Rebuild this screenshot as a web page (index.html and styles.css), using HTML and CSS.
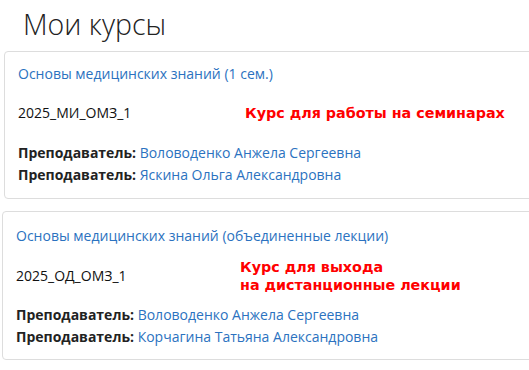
FILE: index.html
```html
<!DOCTYPE html>
<html lang="ru">
<head>
<meta charset="UTF-8">
<meta name="viewport" content="width=device-width, initial-scale=1.0">
<title>Мои курсы</title>
<link rel="stylesheet" href="styles.css">
</head>
<body>

<h1 class="page-title">Мои курсы</h1>

<div class="course-card course-card-first">
<a class="course-link" href="#">Основы медицинских знаний (1 сем.)</a>
<div class="course-row">
<span class="course-code">2025_МИ_ОМЗ_1</span>
<span class="course-note">Курс для работы на семинарах</span>
</div>
<div class="teachers">
<div class="teacher"><strong>Преподаватель:</strong> <a href="#">Воловоденко Анжела Сергеевна</a></div>
<div class="teacher"><strong>Преподаватель:</strong> <a href="#">Яскина Ольга Александровна</a></div>
</div>
</div>

<div class="course-card course-card-second">
<a class="course-link" href="#">Основы медицинских знаний (объединенные лекции)</a>
<div class="course-row">
<span class="course-code">2025_ОД_ОМЗ_1</span>
<span class="course-note">Курс для выхода<br>на дистанционные лекции</span>
</div>
<div class="teachers">
<div class="teacher"><strong>Преподаватель:</strong> <a href="#">Воловоденко Анжела Сергеевна</a></div>
<div class="teacher"><strong>Преподаватель:</strong> <a href="#">Корчагина Татьяна Александровна</a></div>
</div>
</div>

</body>
</html>
```

FILE: styles.css
```css
html {
overflow: hidden;
}
body {
margin: 0;
font-family: "Open Sans", "Noto Sans", sans-serif;
font-size: 14px;
color: #222;
background: #fff;
}
a {
color: #2b72c0;
text-decoration: none;
}
.page-title {
margin: 6px 0 9px 23px;
font-size: 28.5px;
line-height: 36px;
font-weight: 300;
color: #222;
}
.course-card {
width: 600px;
border: 1px solid #ddd;
border-radius: 4px;
line-height: 22px;
}
.course-card-first {
margin-left: 4px;
padding: 11px 13px 12px;
}
.course-card-second {
margin: 12px 0 0 2px;
padding: 13px 13px 11px;
}
.course-link {
display: block;
}
.course-row {
display: flex;
align-items: center;
margin-top: 17px;
}
.course-code {
width: 227px;
color: #111;
}
.course-note {
font-family: "DejaVu Sans", sans-serif;
font-weight: bold;
font-size: 14.3px;
line-height: 18px;
color: #ff0000;
}
.teachers {
margin-top: 18px;
}
.course-card-second .course-row {
margin-top: 11px;
}
.course-card-second .course-code {
width: 224px;
}
.course-card-second .teachers {
margin-top: 10px;
}
.teacher strong {
color: #222;
}
```
